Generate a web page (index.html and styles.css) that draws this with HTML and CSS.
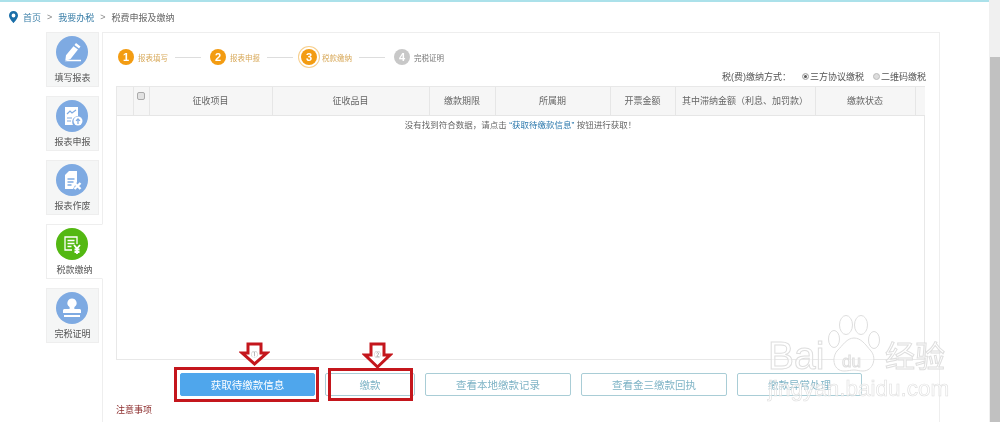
FILE: index.html
```html
<!DOCTYPE html>
<html lang="zh-CN">
<head>
    <meta charset="UTF-8">
    <title>税费申报及缴纳</title>
    <link rel="stylesheet" href="styles.css">
</head>
<body>
<div class="page">
    <div class="main">
        <div class="topline"></div>
        <div class="crumbs">
            <svg class="pin" width="9" height="12" viewBox="0 0 9 12"><path fill="#1a6ea8" fill-rule="evenodd" d="M4.5 0C2 0 0 2 0 4.4 0 7.4 4.5 12 4.5 12S9 7.4 9 4.4C9 2 7 0 4.5 0zm0 2.6a1.9 1.9 0 1 1 0 3.8 1.9 1.9 0 0 1 0-3.8z"/></svg>
            <a class="crumb-link">首页</a><span class="sep">&gt;</span>
            <a class="crumb-link">我要办税</a><span class="sep">&gt;</span>
            <span>税费申报及缴纳</span>
        </div>
        <div class="content">
            <div class="sidebar">
                <div class="tab">
                    <div class="tab-icon">
                        <svg width="32" height="32" viewBox="0 0 32 32"><path fill="#fff" d="M20 7l4.500 3.400-1.500 2-4.500-3.400zM17.500 10.200l4.500 3.400-7.500 9.400-5.200 1.500.7-5.300zM12 23.700h13v1.600H8.500z"/></svg>
                    </div>
                    <span>填写报表</span>
                </div>
                <div class="tab">
                    <div class="tab-icon">
                        <svg width="32" height="32" viewBox="0 0 32 32"><path fill="#fff" d="M9 7h13v9a6 6 0 0 0-5 9H9z"/><path fill="none" stroke="#7eaae2" stroke-width="1.2" d="M11 14l3-3 2 2 4-3M11 18h5M11 21h4"/><circle cx="22" cy="21" r="4.5" fill="#fff"/><path fill="none" stroke="#7eaae2" stroke-width="1.2" d="M22 24v-5M20 20.8l2-2 2 2"/></svg>
                    </div>
                    <span>报表申报</span>
                </div>
                <div class="tab">
                    <div class="tab-icon">
                        <svg width="32" height="32" viewBox="0 0 32 32"><path fill="#fff" d="M13 7h8v11l-4 7H9V11z"/><path fill="none" stroke="#7eaae2" stroke-width="1.3" d="M11.500 15h7M11.500 18h6M11.500 21h4"/><path fill="none" stroke="#fff" stroke-width="2.400" d="M18.500 19l6 6M24.500 19l-6 6"/></svg>
                    </div>
                    <span>报表作废</span>
                </div>
                <div class="tab tab-active">
                    <div class="tab-icon">
                        <svg width="32" height="32" viewBox="0 0 32 32"><path fill="none" stroke="#fff" stroke-width="1.300" d="M21 16V9H9v13h7"/><path fill="none" stroke="#fff" stroke-width="1.300" d="M11.500 12.500h7M11.500 15.500h7M11.500 18.500h4"/><path fill="none" stroke="#fff" stroke-width="1.800" d="M18 17l3 3.500 3-3.500M21 20.500V26M18.500 21.500h5M18.500 24h5"/></svg>
                    </div>
                    <span>税款缴纳</span>
                </div>
                <div class="tab">
                    <div class="tab-icon">
                        <svg width="32" height="32" viewBox="0 0 32 32"><path fill="#fff" d="M16 6.500a4.600 4.600 0 0 1 3 8.100c-.8.700-.9 1.900-.4 2.400h4.900c.8 0 1.500.6 1.500 1.500V21H7v-2.500c0-.9.700-1.500 1.500-1.500h4.900c.5-.5.400-1.700-.4-2.400a4.600 4.600 0 0 1 3-8.100zM8 23h16v2H8z"/></svg>
                    </div>
                    <span>完税证明</span>
                </div>
            </div>
            <div class="panel">
                <div class="steps">
                    <span class="step-no">1</span><span class="step-text">报表填写</span><i class="step-line"></i>
                    <span class="step-no">2</span><span class="step-text">报表申报</span><i class="step-line"></i>
                    <span class="step-no step-now">3</span><span class="step-text">税款缴纳</span><i class="step-line"></i>
                    <span class="step-no step-todo">4</span><span class="step-text step-text-todo">完税证明</span>
                </div>
                <div class="pay-way">
                    <span class="pay-label">税(费)缴纳方式：</span>
                    <span class="radio radio-on"></span><span class="pay-opt">三方协议缴税</span>
                    <span class="radio"></span><span>二维码缴税</span>
                </div>
                <div class="table-box">
                    <table>
                        <colgroup>
                            <col class="c1"><col class="c2"><col class="c3"><col class="c4"><col class="c5">
                            <col class="c6"><col class="c7"><col class="c8"><col class="c9"><col class="c10">
                        </colgroup>
                        <thead>
                            <tr>
                                <th></th>
                                <th class="check-cell"><span class="checkbox"></span></th>
                                <th>征收项目</th>
                                <th>征收品目</th>
                                <th>缴款期限</th>
                                <th>所属期</th>
                                <th>开票金额</th>
                                <th>其中滞纳金额（利息、加罚款）</th>
                                <th>缴款状态</th>
                                <th></th>
                            </tr>
                        </thead>
                    </table>
                    <p class="empty">没有找到符合数据，请点击 <a>“获取待缴款信息”</a> 按钮进行获取！</p>
                </div>
                <div class="buttons">
                    <button class="btn btn-main">获取待缴款信息</button>
                    <button class="btn btn-pay">缴款</button>
                    <button class="btn btn-wide">查看本地缴款记录</button>
                    <button class="btn btn-wide">查看金三缴款回执</button>
                    <button class="btn">缴款异常处理</button>
                </div>
                <div class="notes">注意事项</div>
            </div>
        </div>
    </div>
    <div class="scrollbar"><div class="thumb"></div></div>

    <!-- screenshot annotations -->
    <div class="red-box red-box-1"></div>
    <div class="red-box red-box-2"></div>
    <svg class="arrow arrow-1" width="31" height="25" viewBox="0 0 31 25"><path fill="#fff" stroke="#c4161c" stroke-width="3" d="M9 2h13v9h6L15.500 22 3 11h6z"/></svg>
    <svg class="arrow arrow-2" width="31" height="28" viewBox="0 0 31 28"><path fill="#fff" stroke="#c4161c" stroke-width="3" d="M9 2h13v11h6L15.500 25 3 13h6z"/></svg>
    <span class="arrow-no arrow-no-1">①</span>
    <span class="arrow-no arrow-no-2">②</span>

    <div class="watermark">
        <span class="wm-bai">Bai</span>
        <svg class="wm-paw" width="56" height="60" viewBox="0 0 56 60"><g fill="rgba(255,255,255,.5)" stroke="#ddd" stroke-width="1"><ellipse cx="7" cy="24" rx="5.500" ry="8.500"/><ellipse cx="19" cy="10" rx="6.500" ry="9.500"/><ellipse cx="34" cy="10" rx="6.500" ry="9.500"/><ellipse cx="47" cy="25" rx="5.500" ry="8.500"/><path d="M27 23c7 0 11 6 17 13 6 7 2 20-8 20-4 0-6-1-9-1s-6 1-10 1c-10 0-13-12-7-20 6-6 10-13 17-13z"/></g></svg>
        <span class="wm-du">du</span>
        <span class="wm-jy">经验</span>
        <span class="wm-url">jingyan.baidu.com</span>
    </div>
</div>
</body>
</html>
```

FILE: styles.css
```css
html, body {
    margin: 0;
    padding: 0;
    height: 100%;
    overflow: hidden;
    background: #fff;
}
body {
    font-family: "Liberation Sans", "Noto Sans CJK SC", sans-serif;
    font-size: 9px;
    color: #666;
}
.page {
    position: relative;
    display: flex;
    width: 1000px;
    height: 422px;
    overflow: hidden;
    filter: blur(.35px);
}
.main {
    flex: 1;
    min-width: 0;
}
.topline {
    height: 2px;
    background: #abe1ea;
}
.crumbs {
    display: flex;
    align-items: center;
    height: 30px;
    padding-left: 9px;
}
.pin {
    margin-right: 5px;
}
.crumb-link {
    color: #3b7fa8;
}
.sep {
    margin: 0 6px;
    color: #888;
}

/* sidebar + panel */
.content {
    display: flex;
    padding-left: 46px;
}
.sidebar {
    width: 53px;
    margin-right: 3px;
    flex-shrink: 0;
}
.tab {
    position: relative;
    width: 53px;
    height: 55px;
    margin-bottom: 9px;
    box-sizing: border-box;
    padding-top: 3px;
    background: #f5f6f6;
    border: 1px solid #eee;
    text-align: center;
    color: #555;
    line-height: 14px;
}
.tab-active {
    width: 57px;
    background: #fff;
    z-index: 1;
    border-right-color: #fff;
}
.tab-icon {
    width: 32px;
    height: 32px;
    margin: 0 auto 3px 9px;
    border-radius: 50%;
    background: #7eaae2;
}
.tab-active .tab-icon {
    background: #53b812;
}
.tab-icon svg {
    display: block;
}
.panel {
    width: 838px;
    height: 400px;
    box-sizing: border-box;
    padding-left: 13px;
    border: 1px solid #eee;
}

/* steps */
.steps {
    display: flex;
    align-items: center;
    height: 22px;
    margin-top: 13px;
    padding-left: 2px;
    font-size: 7.5px;
}
.step-no {
    width: 16px;
    height: 16px;
    margin-right: 4px;
    border-radius: 50%;
    background: #f39c12;
    color: #fff;
    font-size: 11px;
    font-weight: bold;
    line-height: 16px;
    text-align: center;
}
.step-now {
    margin-left: -1px;
    margin-right: 5px;
    box-shadow: 0 0 0 2px #fff, 0 0 0 3px #f7cf8c;
}
.step-todo {
    background: #c8c8c8;
}
.step-text {
    width: 30px;
    color: #d8a95a;
    white-space: nowrap;
}
.step-text-todo {
    color: #777;
}
.step-line {
    width: 26px;
    height: 1px;
    margin: 0 9px 0 7px;
    background: #ddd;
}

/* pay method */
.pay-way {
    display: flex;
    align-items: center;
    justify-content: flex-end;
    height: 14px;
    margin-top: 1px;
    margin-bottom: 3px;
    padding-right: 13px;
    color: #555;
    white-space: nowrap;
}
.pay-label {
    margin-right: 11px;
}
.pay-opt {
    margin-right: 9px;
}
.radio {
    position: relative;
    width: 7px;
    height: 7px;
    margin-right: 1px;
    box-sizing: border-box;
    border: 1px solid #bbb;
    border-radius: 50%;
    background: #ddd;
}
.radio-on {
    background: #555;
    box-shadow: inset 0 0 0 1px #fff;
}

/* table */
.table-box {
    width: 809px;
    height: 274px;
    box-sizing: border-box;
    border: 1px solid #e8e8e8;
}
table {
    width: 808px;
    table-layout: fixed;
    border-collapse: collapse;
}
.c1 { width: 16px; }
.c2 { width: 16px; }
.c3 { width: 123px; }
.c4 { width: 157px; }
.c5 { width: 66px; }
.c6 { width: 115px; }
.c7 { width: 65px; }
.c8 { width: 140px; }
.c9 { width: 100px; }
.c10 { width: 10px; }
th {
    height: 28px;
    box-sizing: border-box;
    padding: 0;
    background: #f6f6f6;
    border-right: 1px solid #e6e6e6;
    border-bottom: 1px solid #e6e6e6;
    font-weight: normal;
    color: #666;
    white-space: nowrap;
}
th:last-child {
    border-right: none;
}
.check-cell {
    vertical-align: top;
    padding-top: 5px;
    line-height: 0;
}
.checkbox {
    display: inline-block;
    width: 8px;
    height: 8px;
    box-sizing: border-box;
    border: 1px solid #aaa;
    border-radius: 2px;
    background: #e2e2e2;
}
.empty {
    margin: 2px 0 0;
    text-align: center;
    font-size: 8.500px;
    line-height: 14px;
    color: #666;
}
.empty a {
    color: #2c79ad;
}

/* buttons */
.buttons {
    display: flex;
    gap: 10px;
    margin-top: 13px;
    padding-left: 64px;
}
.btn {
    width: 125px;
    height: 23px;
    padding: 0;
    box-sizing: border-box;
    background: #fff;
    border: 1px solid #a9cdd6;
    border-radius: 2px;
    color: #7fb4c6;
    font: 10.500px "Liberation Sans", "Noto Sans CJK SC", sans-serif;
}
.btn-main {
    width: 135px;
    background: #4fa6ec;
    border-color: #4fa6ec;
    color: #fff;
}
.btn-pay {
    width: 90px;
}
.btn-wide {
    width: 146px;
}
.notes {
    margin-top: 7px;
    color: #8c2d2d;
    line-height: 14px;
}

/* scrollbar of the window */
.scrollbar {
    width: 11px;
    padding-top: 57px;
    background: #f0f0f0;
    flex-shrink: 0;
}
.thumb {
    height: 365px;
    margin-left: 1px;
    background: #c1c1c1;
}

/* annotations */
.red-box {
    position: absolute;
    box-sizing: border-box;
    border: 3px solid #c4161c;
}
.red-box-1 {
    left: 174px;
    top: 367px;
    width: 145px;
    height: 35px;
}
.red-box-2 {
    left: 328px;
    top: 368px;
    width: 85px;
    height: 33px;
}
.arrow {
    position: absolute;
    top: 342px;
}
.arrow-1 {
    left: 239px;
}
.arrow-2 {
    left: 362px;
}
.arrow-no {
    position: absolute;
    top: 349px;
    font-size: 7px;
    color: #888;
}
.arrow-no-1 {
    left: 251px;
}
.arrow-no-2 {
    left: 374px;
}

/* baidu watermark */
.watermark {
    position: absolute;
    left: 768px;
    top: 315px;
    width: 180px;
    height: 90px;
    color: rgba(255,255,255,.55);
    -webkit-text-stroke: 1px #dedede;
    white-space: nowrap;
}
.wm-bai,
.wm-du,
.wm-jy,
.wm-url {
    position: absolute;
}
.wm-bai {
    left: 0;
    top: 21px;
    font-size: 39px;
    line-height: 40px;
}
.wm-paw {
    position: absolute;
    left: 59px;
    top: 0;
}
.wm-du {
    left: 74px;
    top: 37px;
    font-size: 17px;
    line-height: 20px;
}
.wm-jy {
    left: 117px;
    top: 24px;
    font-size: 30px;
    line-height: 36px;
}
.wm-url {
    left: 0;
    top: 61px;
    font-size: 22.500px;
    line-height: 26px;
    -webkit-text-stroke: .6px #dedede;
}
```
